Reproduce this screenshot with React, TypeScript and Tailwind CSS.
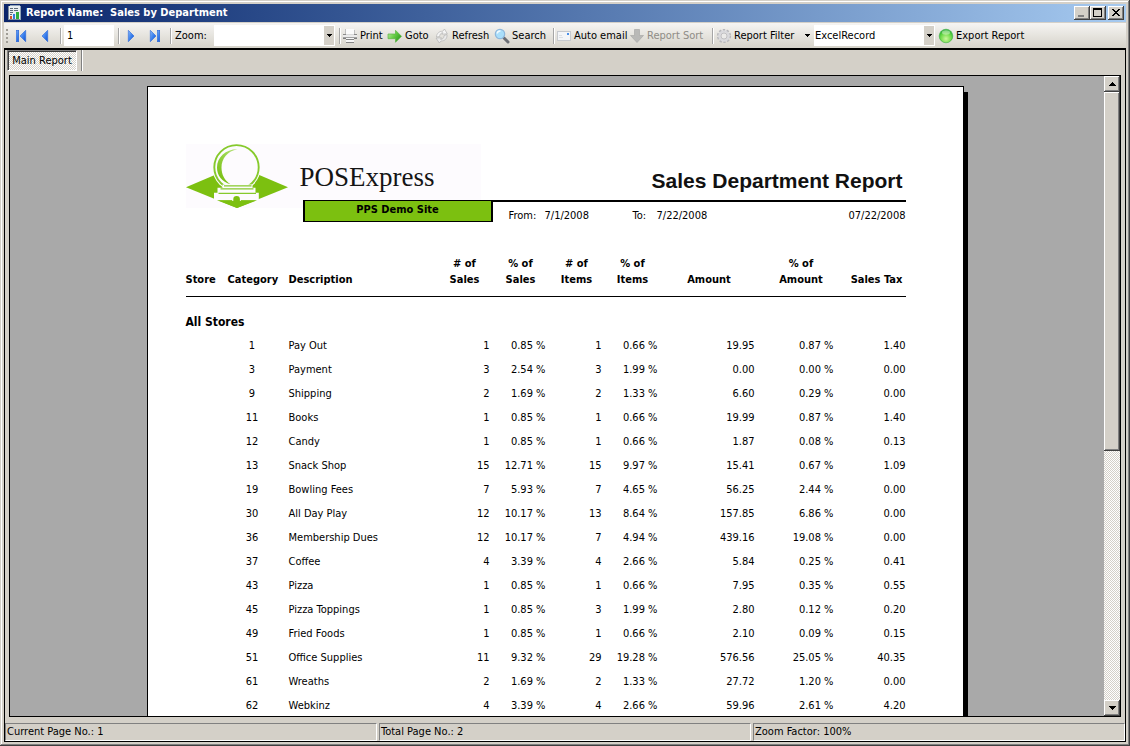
import React from "react";

const FACE = "bg-[#d4d0c8]";
const RAISED =
  "bg-[#d4d0c8] shadow-[inset_-1px_-1px_0_#404040,inset_1px_1px_0_#ffffff,inset_-2px_-2px_0_#808080]";
const DITHER =
  "bg-[repeating-conic-gradient(#ffffff_0_25%,#d4d0c8_0_50%)] bg-[length:2px_2px]";

type Row = [string, string, string, string, string, string, string, string, string];

const ROWS: Row[] = [
  ["1", "Pay Out", "1", "0.85 %", "1", "0.66 %", "19.95", "0.87 %", "1.40"],
  ["3", "Payment", "3", "2.54 %", "3", "1.99 %", "0.00", "0.00 %", "0.00"],
  ["9", "Shipping", "2", "1.69 %", "2", "1.33 %", "6.60", "0.29 %", "0.00"],
  ["11", "Books", "1", "0.85 %", "1", "0.66 %", "19.99", "0.87 %", "1.40"],
  ["12", "Candy", "1", "0.85 %", "1", "0.66 %", "1.87", "0.08 %", "0.13"],
  ["13", "Snack Shop", "15", "12.71 %", "15", "9.97 %", "15.41", "0.67 %", "1.09"],
  ["19", "Bowling Fees", "7", "5.93 %", "7", "4.65 %", "56.25", "2.44 %", "0.00"],
  ["30", "All Day Play", "12", "10.17 %", "13", "8.64 %", "157.85", "6.86 %", "0.00"],
  ["36", "Membership Dues", "12", "10.17 %", "7", "4.94 %", "439.16", "19.08 %", "0.00"],
  ["37", "Coffee", "4", "3.39 %", "4", "2.66 %", "5.84", "0.25 %", "0.41"],
  ["43", "Pizza", "1", "0.85 %", "1", "0.66 %", "7.95", "0.35 %", "0.55"],
  ["45", "Pizza Toppings", "1", "0.85 %", "3", "1.99 %", "2.80", "0.12 %", "0.20"],
  ["49", "Fried Foods", "1", "0.85 %", "1", "0.66 %", "2.10", "0.09 %", "0.15"],
  ["51", "Office Supplies", "11", "9.32 %", "29", "19.28 %", "576.56", "25.05 %", "40.35"],
  ["61", "Wreaths", "2", "1.69 %", "2", "1.33 %", "27.72", "1.20 %", "0.00"],
  ["62", "Webkinz", "4", "3.39 %", "4", "2.66 %", "59.96", "2.61 %", "4.20"],
];

function ReportIcon() {
  return (
    <svg className="h-4 w-4 shrink-0" viewBox="0 0 16 16" shapeRendering="crispEdges" aria-hidden="true">
      <path d="M4 0h10v1h1v14h-1V1H4z" fill="#8fa3b8" />
      <rect x="2" y="1" width="12" height="14" fill="#e9eef2" />
      <path d="M2 1h1v14H2zM2 14h12v1H2z" fill="#7c8c9c" />
      <path d="M4 3h3v1H4zM8 3h4v1H8zM4 5h3v1H4zM8 5h4v1H8zM4 7h3v1H4zM4 9h2v1H4z" fill="#5d6c7a" />
      <rect x="4" y="11" width="2" height="3" fill="#d9502a" />
      <rect x="7" y="9" width="2" height="5" fill="#2f7be0" />
      <rect x="10" y="7" width="3" height="7" fill="#2fae3c" />
    </svg>
  );
}

function SharedGradients() {
  return (
    <svg className="absolute h-0 w-0" aria-hidden="true">
      <defs>
        <linearGradient id="blue" x1="0" y1="0" x2="1" y2="1">
          <stop offset="0" stopColor="#8fbcf8" />
          <stop offset="0.5" stopColor="#3c82ee" />
          <stop offset="1" stopColor="#0c4fd0" />
        </linearGradient>
        <linearGradient id="greenArrow" x1="0" y1="0" x2="1" y2="0.6">
          <stop offset="0" stopColor="#c4ecae" />
          <stop offset="0.5" stopColor="#6cd04a" />
          <stop offset="1" stopColor="#2f9e20" />
        </linearGradient>
        <radialGradient id="greenBall" cx="0.5" cy="0.7" r="0.65">
          <stop offset="0" stopColor="#cdf79c" />
          <stop offset="0.6" stopColor="#6fdb4a" />
          <stop offset="1" stopColor="#2bb034" />
        </radialGradient>
      </defs>
    </svg>
  );
}

function NavIcon({ kind }: { kind: "first" | "prev" | "next" | "last" }) {
  return (
    <svg className="h-4 w-4" viewBox="0 0 16 16" aria-hidden="true">
      <g fill="url(#blue)" stroke="#2a66d8" strokeWidth="0.6">
        {kind === "first" && (
          <>
            <rect x="2.3" y="2.3" width="2.4" height="11.400" />
            <path d="M11.7 2.300v11.400L6 8z" />
          </>
        )}
        {kind === "prev" && <path d="M9.700 2.300v11.400L4 8z" />}
        {kind === "next" && <path d="M4.300 2.300v11.400L10 8z" />}
        {kind === "last" && (
          <>
            <path d="M2.300 2.300v11.400L8 8z" />
            <rect x="9.300" y="2.300" width="2.400" height="11.400" />
          </>
        )}
      </g>
    </svg>
  );
}

function PrintIcon() {
  return (
    <svg className="h-4 w-4 shrink-0" viewBox="0 0 16 16" shapeRendering="crispEdges" aria-hidden="true">
      <rect x="4" y="1" width="8" height="5" fill="#fbfbfb" />
      <path d="M3 1h1v5H3zM12 2h1v4h-1z" fill="#c0c0c0" />
      <path d="M1 6h3v1H1zM12 6h3v1h-3z" fill="#8a8a8a" />
      <rect x="4" y="6" width="8" height="1" fill="#dadada" />
      <rect x="1" y="7" width="14" height="2" fill="#ececec" />
      <rect x="1" y="9" width="14" height="1" fill="#a2a2a2" />
      <path d="M1 10h3v1H1zM12 10h3v1h-3z" fill="#7d7d7d" />
      <rect x="4" y="10" width="8" height="4" fill="#f7f7f7" />
      <path d="M4 11h8v1H4zM4 14h8v1H4z" fill="#858585" />
    </svg>
  );
}

function GotoIcon() {
  return (
    <svg className="h-4 w-4 shrink-0" viewBox="0 0 16 16" aria-hidden="true">
      <path d="M1 6h7.500V2.300L14.500 8.300l-6 6v-3.600H1z" fill="url(#greenArrow)" stroke="#5cb545" strokeWidth="0.700" />
    </svg>
  );
}

function RefreshIcon() {
  return (
    <svg className="h-4 w-4 shrink-0" viewBox="0 0 16 16" fill="none" aria-hidden="true">
      <path
        d="M2.500 9C2.500 5.500 5.500 3 8.700 3.300L10.500 1l2.800 4.800-5.600.4 1.200-1.500C7 4.700 5.500 6.500 5.700 8.500z"
        fill="#f6f6f6"
        stroke="#b2b2b2"
        strokeWidth="0.700"
      />
      <path
        d="M13 6.500c.6 4-2.500 6.700-6 6.500l-1.700 2-3.300-5 5.500-.2-1 1.500c2 .2 3.800-1.300 3.500-3.800z"
        fill="#ebebeb"
        stroke="#b2b2b2"
        strokeWidth="0.700"
      />
    </svg>
  );
}

function SearchIcon() {
  return (
    <svg className="h-4 w-4 shrink-0" viewBox="0 0 16 16" aria-hidden="true">
      <path d="M10 10l4 4" stroke="#6b6e74" strokeWidth="3" strokeLinecap="round" />
      <circle cx="6" cy="6" r="4.700" fill="#a9defa" stroke="#8fb8dc" strokeWidth="1.200" />
      <path d="M3.200 5.500A3 3 0 0 1 6.500 3" stroke="#f4fbff" strokeWidth="1.500" fill="none" />
    </svg>
  );
}

function MailIcon() {
  return (
    <svg className="h-4 w-4 shrink-0" viewBox="0 0 16 16" shapeRendering="crispEdges" aria-hidden="true">
      <rect x="1" y="3" width="14" height="10" fill="#c6c9ce" />
      <rect x="2" y="4" width="12" height="8" fill="#f3f5f8" />
      <path d="M3 9h4v1H3zM3 7h3v1H3z" fill="#dcdfe3" />
      <rect x="11" y="5" width="2" height="2" fill="#4a8fe8" />
    </svg>
  );
}

function SortIcon() {
  return (
    <svg className="h-4 w-4 shrink-0" viewBox="0 0 16 16" aria-hidden="true">
      <path d="M5.500 1.500h5v6h4L8 14.500 1.500 7.500h4z" fill="#b9b9b7" stroke="#a9a9a7" strokeWidth="0.700" />
    </svg>
  );
}

function GearIcon() {
  return (
    <svg className="h-4 w-4 shrink-0" viewBox="0 0 16 16" fill="none" aria-hidden="true">
      <circle cx="8" cy="8" r="6" stroke="#b8b8bc" strokeWidth="2.200" strokeDasharray="2.300 1.470" />
      <circle cx="8" cy="8" r="4.600" stroke="#d9d9dd" strokeWidth="2.400" />
      <circle cx="8" cy="8" r="3" stroke="#b0b0b5" strokeWidth="0.700" fill="#ecebe9" />
    </svg>
  );
}

function BallIcon() {
  return (
    <svg className="h-4 w-4 shrink-0" viewBox="0 0 16 16" aria-hidden="true">
      <circle cx="8" cy="8" r="6.800" fill="url(#greenBall)" stroke="#3cae46" strokeWidth="0.600" />
      <ellipse cx="8" cy="4.500" rx="4" ry="2.200" fill="#ffffff" opacity="0.400" />
    </svg>
  );
}

function Separator() {
  return <div className="h-4 w-[2px] shrink-0 border-l border-[#a6a6a6] border-r border-r-white" />;
}

function NavButton({ kind, label }: { kind: "first" | "prev" | "next" | "last"; label: string }) {
  return (
    <button type="button" aria-label={label} className="flex h-[22px] w-6 shrink-0 items-center justify-center">
      <NavIcon kind={kind} />
    </button>
  );
}

function ToolButton({
  icon,
  children,
  width,
  disabled = false,
}: {
  icon: React.ReactNode;
  children: React.ReactNode;
  width: string;
  disabled?: boolean;
}) {
  return (
    <button
      type="button"
      disabled={disabled}
      className={`flex h-[22px] shrink-0 items-center gap-[2px] whitespace-nowrap ${width} ${
        disabled ? "text-[#8f8c86]" : "text-black"
      }`}
    >
      {icon}
      {children}
    </button>
  );
}

function DownArrow() {
  return (
    <svg className="h-[3px] w-[5px]" viewBox="0 0 5 3" shapeRendering="crispEdges" aria-hidden="true">
      <path d="M0 0h5v1H0zM1 1h3v1H1zM2 2h1v1H2z" fill="#000" />
    </svg>
  );
}

function Combo({ label, value }: { label: string; value: string }) {
  return (
    <div className="relative h-[21px] w-[121px] shrink-0 bg-white">
      <select
        aria-label={label}
        defaultValue={value}
        className="h-full w-full appearance-none bg-transparent pl-px pr-3 outline-none"
      >
        <option value={value}>{value}</option>
      </select>
      <div className="pointer-events-none absolute inset-y-px right-px flex w-[10px] items-center justify-center bg-[#d4d0c8]">
        <DownArrow />
      </div>
    </div>
  );
}

function TitleBar() {
  return (
    <header className="flex h-[18px] shrink-0 items-center bg-linear-to-r from-[#0a246a] to-[#a6caf0] pl-[2px] pr-[2px]">
      <ReportIcon />
      <h1 className="flex-1 whitespace-pre pl-1 text-[11px] font-bold text-white">
        {"Report Name:  Sales by Department"}
      </h1>
      <div className="flex">
        <button type="button" aria-label="Minimize" className={`flex h-[14px] w-4 items-end pb-[3px] pl-1 ${RAISED}`}>
          <span className="h-[2px] w-[6px] bg-[#808080]" />
        </button>
        <button type="button" aria-label="Maximize" className={`flex h-[14px] w-4 items-start pl-[3px] pt-[2px] ${RAISED}`}>
          <span className="h-[9px] w-[9px] border border-t-2 border-black" />
        </button>
        <button
          type="button"
          aria-label="Close"
          className={`ml-[2px] flex h-[14px] w-4 items-start justify-center pt-[3px] ${RAISED}`}
        >
          <svg className="h-[7px] w-2" viewBox="0 0 8 7" shapeRendering="crispEdges" aria-hidden="true">
            <path
              d="M0 0h2v1H0zM6 0h2v1H6zM1 1h2v1H1zM5 1h2v1H5zM2 2h4v1H2zM3 3h2v1H3zM2 4h4v1H2zM1 5h2v1H1zM5 5h2v1H5zM0 6h2v1H0zM6 6h2v1H6z"
              fill="#000"
            />
          </svg>
        </button>
      </div>
    </header>
  );
}

function Toolbar() {
  return (
    <div
      role="toolbar"
      aria-label="Report"
      className="mt-px flex h-[25px] shrink-0 items-center bg-linear-to-b from-[#f6f5f3] to-[#d6d3ca] pl-[2px]"
    >
      <div className="mr-px flex w-[3px] flex-col gap-[2px]">
        <span className="h-[2px] w-[2px] bg-[#a09d96]" />
        <span className="h-[2px] w-[2px] bg-[#a09d96]" />
        <span className="h-[2px] w-[2px] bg-[#a09d96]" />
        <span className="h-[2px] w-[2px] bg-[#a09d96]" />
      </div>
      <NavButton kind="first" label="First page" />
      <NavButton kind="prev" label="Previous page" />
      <div className="ml-[2px] pr-[2px]">
        <Separator />
      </div>
      <input
        aria-label="Page number"
        defaultValue="1"
        className="h-[21px] w-[50px] shrink-0 bg-white pl-[3px] outline-none"
      />
      <div className="pl-1">
        <Separator />
      </div>
      <NavButton kind="next" label="Next page" />
      <NavButton kind="last" label="Last page" />
      <div className="pl-[2px] pr-[3px]">
        <Separator />
      </div>
      <span className="w-[39px] shrink-0">Zoom:</span>
      <Combo label="Zoom" value="" />
      <div className="pl-1 pr-px">
        <Separator />
      </div>
      <ToolButton icon={<PrintIcon />} width="w-[45px]">Print</ToolButton>
      <ToolButton icon={<GotoIcon />} width="w-[47px]">Goto</ToolButton>
      <ToolButton icon={<RefreshIcon />} width="w-[60px]">Refresh</ToolButton>
      <ToolButton icon={<SearchIcon />} width="w-[59px]">Search</ToolButton>
      <div className="pr-px">
        <Separator />
      </div>
      <ToolButton icon={<MailIcon />} width="w-[73px]">Auto email</ToolButton>
      <ToolButton icon={<SortIcon />} width="w-[83px]" disabled>Report Sort</ToolButton>
      <div className="pr-[2px]">
        <Separator />
      </div>
      <ToolButton icon={<GearIcon />} width="w-[89px]">Report Filter</ToolButton>
      <button type="button" aria-label="Filter options" className="flex h-[22px] w-[9px] shrink-0 items-center">
        <DownArrow />
      </button>
      <Combo label="Export format" value="ExcelRecord" />
      <div className="pl-[3px]">
        <ToolButton icon={<BallIcon />} width="w-[90px]">Export Report</ToolButton>
      </div>
    </div>
  );
}

function Logo() {
  return (
    <div className="flex h-16 w-[295px] shrink-0 items-center bg-[#fdfbfe]">
      <svg className="h-16 w-[102px] shrink-0" viewBox="0 0 102 64" aria-hidden="true">
        <defs>
          <linearGradient id="crescent" x1="1" y1="0" x2="0.300" y2="1">
            <stop offset="0" stopColor="#b9e27e" />
            <stop offset="0.400" stopColor="#98d54a" />
            <stop offset="1" stopColor="#79be12" />
          </linearGradient>
        </defs>
        <path d="M0 43.300L51 21.500l51 21.800L51 64z" fill="#7cc010" />
        <circle cx="50.500" cy="23.300" r="24.200" fill="#fdfbfe" />
        <circle cx="50.500" cy="23.300" r="22.200" fill="#fdfbfe" stroke="#86ca2c" strokeWidth="1.900" />
        <path
          d="M51.500 5.200C40 5 31 13 31 23.500c0 8 5 14.500 13.500 16.800C38.500 36.500 35.500 30.500 35.500 23.500 35.500 14.500 41.500 7 51.500 5.200z"
          fill="url(#crescent)"
        />
        <path d="M36.500 40.500h30v3.300h3v5h3.300v7.700H28v-7.700h3.500v-5h5z" fill="#fdfbfe" />
        <path d="M38 41.800h27.500M34.500 44.800h33M32.500 49.300h37.500" stroke="#86c92c" strokeWidth="1.300" />
        <path d="M31 56.300h40L51 64z" fill="#7cc010" />
        <circle cx="50.500" cy="55.300" r="4.500" fill="#fdfbfe" />
        <path d="M47.300 57.500v-2.200a3.300 3.300 0 0 1 6.600 0v2.200z" fill="#7cc010" />
        <path d="M46 57h9.500v3H46z" fill="#7cc010" />
      </svg>
      <span className="pl-3 pt-[2px] font-['Liberation_Serif',serif] text-[27px] leading-8 text-[#151515]">
        POSExpress
      </span>
    </div>
  );
}

function ReportTable() {
  return (
    <table className="mt-[34px] w-full table-fixed border-collapse whitespace-nowrap text-[11px] leading-4">
      <colgroup>
        <col className="w-[42px]" />
        <col className="w-[49px]" />
        <col />
        <col className="w-[50px]" />
        <col className="w-[56px]" />
        <col className="w-[56px]" />
        <col className="w-[56px]" />
        <col className="w-[97px]" />
        <col className="w-[79px]" />
        <col className="w-[72px]" />
      </colgroup>
      <thead>
        <tr className="border-b border-black align-bottom font-bold">
          <th className="pb-2 text-left">Store</th>
          <th className="pb-2 text-center">Category</th>
          <th className="pb-2 pl-3 text-left">Description</th>
          <th className="pb-2"># of<br />Sales</th>
          <th className="pb-2 pl-[6px]">% of<br />Sales</th>
          <th className="pb-2 pl-[6px]"># of<br />Items</th>
          <th className="pb-2 pl-[6px]">% of<br />Items</th>
          <th className="pb-2 pl-[6px]">Amount</th>
          <th className="pb-2 pl-[14px]">% of<br />Amount</th>
          <th className="pb-2 pl-[14px]">Sales Tax</th>
        </tr>
      </thead>
      <tbody>
        <tr className="h-9">
          <th colSpan={10} className="pt-[14px] text-left text-[12px] font-bold">All Stores</th>
        </tr>
        {ROWS.map(([category, description, ...figures]) => (
          <tr key={category} className="h-6">
            <td />
            <td className="pt-[2px] text-center">{category}</td>
            <td className="pl-3 pt-[2px]">{description}</td>
            {figures.map((figure, i) => (
              <td key={i} className="pt-[2px] text-right">{figure}</td>
            ))}
          </tr>
        ))}
      </tbody>
    </table>
  );
}

function ReportPage() {
  return (
    <div className="mx-auto mt-[10px] flex w-[821px] items-start">
      <article className="min-h-[1056px] flex-1 border border-black bg-white pl-[38px] pr-[57px] pt-[57px]">
        <div className="flex h-14 items-start justify-between">
          <Logo />
          <h2 className="pr-[3px] pt-[25px] font-['Liberation_Sans',sans-serif] text-[21px] font-bold leading-6 text-[#111111]">
            Sales Department Report
          </h2>
        </div>
        <div className="flex pl-[117px]">
          <div className="relative h-[22px] w-[190px] shrink-0 border-2 border-t border-b border-black bg-[#7cc010] text-center text-[11px] font-bold leading-[18px]">
            PPS Demo Site
          </div>
          <div className="flex h-[22px] flex-1 whitespace-nowrap border-t-2 border-black pl-4 pt-[6px] text-[11px] leading-4">
            <span className="w-9">From:</span>
            <span className="w-[88px]">7/1/2008</span>
            <span className="w-6">To:</span>
            <span>7/22/2008</span>
            <span className="ml-auto">07/22/2008</span>
          </div>
        </div>
        <ReportTable />
      </article>
      <div className="mt-[6px] min-h-[1056px] w-1 bg-black" />
    </div>
  );
}

function Scrollbar() {
  return (
    <div className={`flex w-4 shrink-0 flex-col ${DITHER}`}>
      <button type="button" aria-label="Scroll up" className={`flex h-4 shrink-0 items-center justify-center ${RAISED}`}>
        <svg className="h-1 w-[7px]" viewBox="0 0 7 4" shapeRendering="crispEdges" aria-hidden="true">
          <path d="M3 0h1v1H3zM2 1h3v1H2zM1 2h5v1H1zM0 3h7v1H0z" />
        </svg>
      </button>
      <div className="min-h-0 flex-1">
        <div className={`h-[59%] ${RAISED}`} />
      </div>
      <button type="button" aria-label="Scroll down" className={`flex h-4 shrink-0 items-center justify-center ${RAISED}`}>
        <svg className="h-1 w-[7px]" viewBox="0 0 7 4" shapeRendering="crispEdges" aria-hidden="true">
          <path d="M0 0h7v1H0zM1 1h5v1H1zM2 2h3v1H2zM3 3h1v1H3z" />
        </svg>
      </button>
    </div>
  );
}

function StatusPanel({ children }: { children: React.ReactNode }) {
  return (
    <div className="flex-1 whitespace-nowrap border border-[#808080] border-b-white border-r-white pl-px leading-4">
      {children}
    </div>
  );
}

export default function App() {
  return (
    <div
      className={`flex h-screen flex-col overflow-hidden p-1 font-['DejaVu_Sans_Condensed','DejaVu_Sans',sans-serif] text-[11px] leading-4 text-black shadow-[inset_-1px_-1px_0_#404040,inset_1px_1px_0_#d4d0c8,inset_-2px_-2px_0_#808080,inset_2px_2px_0_#ffffff] ${FACE}`}
    >
      <SharedGradients />
      <TitleBar />
      <Toolbar />
      <main className="flex min-h-0 flex-1 flex-col border border-t-2 border-black">
        <div className="flex h-[25px] shrink-0 items-start pl-[2px]">
          <button
            type="button"
            className={`h-[21px] w-[70px] whitespace-nowrap border border-[#808080] border-b-white border-r-white pt-px text-center shadow-[inset_1px_1px_0_#404040] ${DITHER}`}
          >
            Main Report
          </button>
          <div className="ml-1 h-[21px] w-[2px] border-l border-[#808080] border-r border-r-white" />
        </div>
        <div className="mx-1 flex min-h-0 flex-1 border border-black bg-[#a9a9a9]">
          <div className="min-w-0 flex-1 overflow-hidden">
            <ReportPage />
          </div>
          <Scrollbar />
        </div>
        <footer className="mt-[6px] flex h-[18px] shrink-0 gap-[2px]">
          <StatusPanel>Current Page No.: 1</StatusPanel>
          <StatusPanel>Total Page No.: 2</StatusPanel>
          <StatusPanel>Zoom Factor: 100%</StatusPanel>
        </footer>
      </main>
    </div>
  );
}
